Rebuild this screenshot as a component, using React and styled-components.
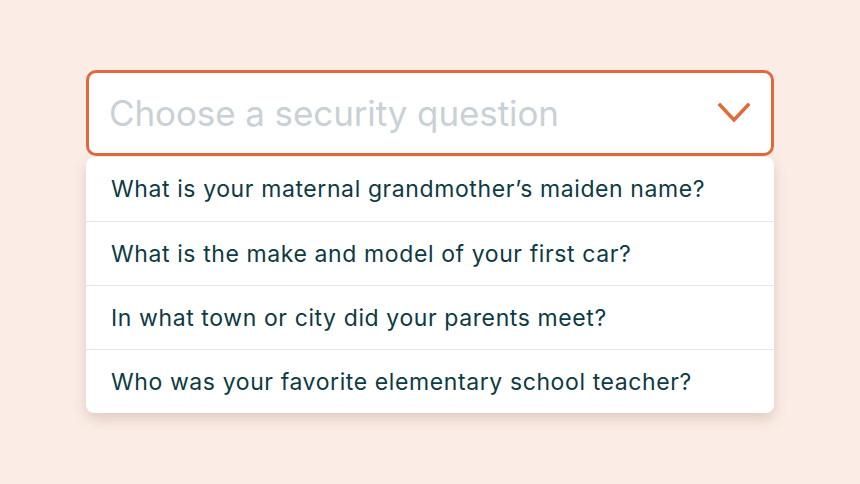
import styled, { createGlobalStyle } from "styled-components";

const questions = [
  "What is your maternal grandmother’s maiden name?",
  "What is the make and model of your first car?",
  "In what town or city did your parents meet?",
  "Who was your favorite elementary school teacher?",
];

export const GlobalStyle = createGlobalStyle`
  html, body {
    margin: 0;
    padding: 0;
    background: #fbede6;
  }
  body {
    font-family: Inter, "Open Sans", sans-serif;
  }
`;

const Page = styled.div`
  width: 860px;
  height: 484px;
  padding-top: 70px;
  box-sizing: border-box;
  display: flex;
  justify-content: center;
`;

const Select = styled.div`
  width: 688px;
  display: flex;
  flex-direction: column;
`;

const Trigger = styled.div`
  height: 86px;
  box-sizing: border-box;
  border: 3px solid #e4693a;
  border-radius: 10px;
  background: #fff;
  display: flex;
  align-items: center;
  justify-content: space-between;
  padding: 0 20px 0 20px;
`;

const Placeholder = styled.span`
  font-size: 35px;
  color: #c8d1d5;
  letter-spacing: -0.1px;
`;

const Menu = styled.ul`
  list-style: none;
  margin: 1px 0 0;
  padding: 0;
  background: #fff;
  border-radius: 8px;
  box-shadow: 0 6px 14px rgba(120, 80, 60, 0.22);
  overflow: hidden;
`;

const Option = styled.li`
  height: 64px;
  display: flex;
  align-items: center;
  padding: 0 25px;
  font-size: 23px;
  letter-spacing: 0.6px;
  color: #0e3a44;
  border-top: ${(p) => (p.$first ? "none" : "1.5px solid #e6e6e6")};
  box-sizing: border-box;
`;

const Chevron = () => (
  <svg width="34" height="24" viewBox="0 0 34 24">
    <path
      d="M3 4 L17 19 L31 4"
      fill="none"
      stroke="#e4693a"
      strokeWidth="3.5"
      strokeLinecap="square"
    />
  </svg>
);

const App = () => (
  <>
    <GlobalStyle />
    <Page>
      <Select>
        <Trigger>
          <Placeholder>Choose a security question</Placeholder>
          <Chevron />
        </Trigger>
        <Menu>
          {questions.map((q, i) => (
            <Option key={q} $first={i === 0}>
              {q}
            </Option>
          ))}
        </Menu>
      </Select>
    </Page>
  </>
);

export default App;
